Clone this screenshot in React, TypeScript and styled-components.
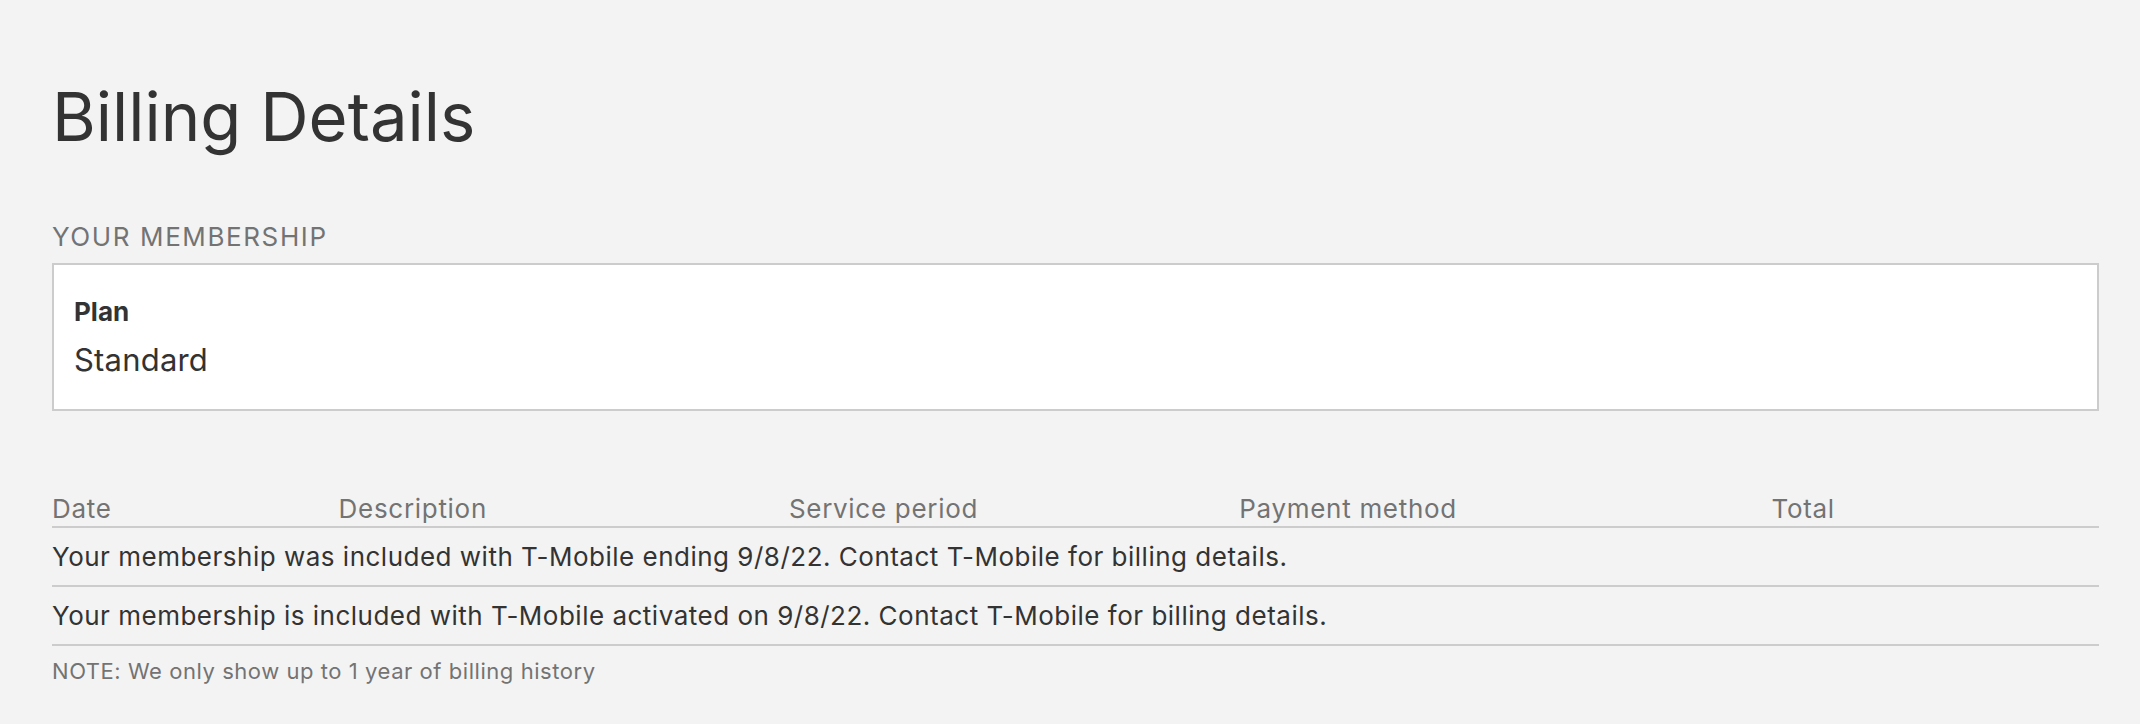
import React from "react";
import styled, { createGlobalStyle } from "styled-components";

const GlobalStyle = createGlobalStyle`
  html, body {
    margin: 0;
    padding: 0;
    background: #f3f3f3;
  }
  body {
    font-family: Inter, "Noto Sans", "Liberation Sans", sans-serif;
    color: #333;
  }
`;

const Page = styled.main`
  padding: 77px 41px 40px 52px;
  box-sizing: border-box;
  width: 2140px;
`;

const Title = styled.h1`
  margin: 0;
  font-size: 67px;
  line-height: 80px;
  font-weight: 400;
  color: #333;
`;

const SectionLabel = styled.h2`
  margin: 64px 0 10px;
  font-size: 26px;
  line-height: 32px;
  font-weight: 400;
  letter-spacing: 1.6px;
  color: #737373;
  text-transform: uppercase;
`;

const Card = styled.section`
  background: #fff;
  border: 2px solid #ccc;
  padding: 31px 20px 29px;
`;

const FieldLabel = styled.div`
  font-size: 26px;
  line-height: 32px;
  font-weight: 700;
  color: #333;
`;

const FieldValue = styled.div`
  margin-top: 12px;
  font-size: 31px;
  line-height: 40px;
  letter-spacing: 0.2px;
  color: #333;
`;

const Table = styled.div`
  margin-top: 82px;
  display: grid;
  grid-template-columns: 14% 22% 22% 26% 16%;
`;

const HeaderCell = styled.div`
  font-size: 26px;
  line-height: 32px;
  letter-spacing: 0.7px;
  color: #737373;
  padding-bottom: 1px;
  border-bottom: 2px solid #ccc;
`;

const RowCell = styled.div`
  grid-column: 1 / -1;
  font-size: 26px;
  line-height: 32px;
  letter-spacing: 0.5px;
  color: #333;
  padding: 13px 0 12px;
  border-bottom: 2px solid #ccc;
`;

const Note = styled.p`
  margin: 11px 0 0;
  font-size: 22px;
  line-height: 28px;
  letter-spacing: 0.55px;
  color: #737373;
`;

const headers = ["Date", "Description", "Service period", "Payment method", "Total"];
const rows = [
  "Your membership was included with T-Mobile ending 9/8/22. Contact T-Mobile for billing details.",
  "Your membership is included with T-Mobile activated on 9/8/22. Contact T-Mobile for billing details.",
];

export default function App() {
  return (
    <>
      <GlobalStyle />
      <Page>
        <Title>Billing Details</Title>
        <SectionLabel>Your Membership</SectionLabel>
        <Card>
          <FieldLabel>Plan</FieldLabel>
          <FieldValue>Standard</FieldValue>
        </Card>
        <Table>
          {headers.map((h) => (
            <HeaderCell key={h}>{h}</HeaderCell>
          ))}
          {rows.map((r) => (
            <RowCell key={r}>{r}</RowCell>
          ))}
        </Table>
        <Note>NOTE: We only show up to 1 year of billing history</Note>
      </Page>
    </>
  );
}
